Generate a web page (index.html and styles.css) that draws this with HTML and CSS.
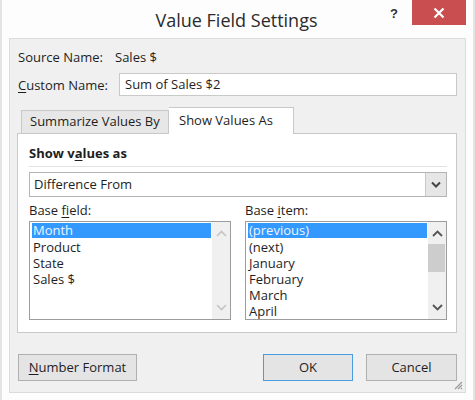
FILE: index.html
```html
<!DOCTYPE html>
<html>
<head>
<meta charset="utf-8">
<link rel="stylesheet" href="styles.css">
</head>
<body>
<div class="window">
  <div class="titlebar">
    <div></div>
    <div class="title">Value Field Settings</div>
    <div class="controls">
      <span class="help">?</span>
      <div class="close">
        <svg width="12" height="12" viewBox="0 0 12 12"><path d="M1.5 1.5 L10.5 10.5 M10.5 1.5 L1.5 10.5" stroke="#fff" stroke-width="2.2" fill="none"/></svg>
      </div>
    </div>
  </div>
  <div class="panel">
    <div class="row source">
      <span class="lbl">Source Name:</span>
      <span>Sales $</span>
    </div>
    <div class="row custom">
      <span class="lbl"><u>C</u>ustom Name:</span>
      <div class="input">Sum of Sales $2</div>
    </div>
    <div class="tabs">
      <div class="tab">Summarize Values By</div>
      <div class="tab active">Show Values As</div>
    </div>
    <div class="tabpanel">
      <div class="section-title">Show v<u>a</u>lues as</div>
      <div class="rule"></div>
      <div class="select">
        <span class="select-text">Difference From</span>
        <span class="drop">
          <svg width="10" height="7" viewBox="0 0 10 7"><path d="M1 1.5 L5 5.5 L9 1.5" stroke="#444" stroke-width="2" fill="none"/></svg>
        </span>
      </div>
      <div class="lists">
        <div class="col">
          <div class="lbl">Base <u>f</u>ield:</div>
          <div class="listbox">
            <div class="items">
              <div class="item sel">Month</div>
              <div class="item">Product</div>
              <div class="item">State</div>
              <div class="item">Sales $</div>
            </div>
            <div class="scroll disabled">
              <svg class="arrow" width="11" height="7" viewBox="0 0 11 7"><path d="M1 6 L5.5 1.5 L10 6" stroke="#c4c4c4" stroke-width="1.6" fill="none"/></svg>
              <div class="track"></div>
              <svg class="arrow" width="11" height="7" viewBox="0 0 11 7"><path d="M1 1 L5.5 5.5 L10 1" stroke="#c4c4c4" stroke-width="1.6" fill="none"/></svg>
            </div>
          </div>
        </div>
        <div class="col">
          <div class="lbl">Base <u>i</u>tem:</div>
          <div class="listbox">
            <div class="items">
              <div class="item sel">(previous)</div>
              <div class="item">(next)</div>
              <div class="item">January</div>
              <div class="item">February</div>
              <div class="item">March</div>
              <div class="item">April</div>
            </div>
            <div class="scroll">
              <svg class="arrow" width="11" height="7" viewBox="0 0 11 7"><path d="M1 6 L5.5 1.5 L10 6" stroke="#555" stroke-width="1.8" fill="none"/></svg>
              <div class="track"><div class="thumb"></div></div>
              <svg class="arrow" width="11" height="7" viewBox="0 0 11 7"><path d="M1 1 L5.5 5.5 L10 1" stroke="#555" stroke-width="1.8" fill="none"/></svg>
            </div>
          </div>
        </div>
      </div>
    </div>
    <div class="buttons">
      <div class="btn numfmt"><u>N</u>umber Format</div>
      <div class="spacer"></div>
      <div class="btn default">OK</div>
      <div class="btn">Cancel</div>
    </div>
    <svg class="grip" width="9" height="9" viewBox="0 0 9 9"><path d="M8 1 L1 8 M8 4 L4 8 M8 7 L7 8" stroke="#9a9a9a" stroke-width="1.2" fill="none"/></svg>
  </div>
</div>
</body>
</html>
```
FILE: styles.css
```css
* { box-sizing: border-box; }
html, body { margin: 0; padding: 0; background: #ffffff; }
body {
  font-family: "Open Sans", "Noto Sans", "Liberation Sans", sans-serif;
  font-size: 13px;
  color: #1e1e1e;
}
u { text-decoration: underline; text-underline-offset: 2px; }

.window {
  width: 475px;
  height: 400px;
  background: #fdfdfd;
  border-left: 2px solid #e4e4e4;
  border-right: 2px solid #e4e4e4;
  display: flex;
  flex-direction: column;
}

.titlebar {
  height: 38px;
  display: grid;
  grid-template-columns: 1fr auto 1fr;
  align-items: start;
}
.title {
  font-size: 18px;
  color: #2b2b2b;
  line-height: 24px;
  padding-top: 8px;
  margin-left: -2px;
}
.controls {
  display: flex;
  justify-content: flex-end;
  align-items: flex-start;
  margin-right: 7px;
}
.help {
  font-family: "Liberation Sans", sans-serif;
  font-weight: bold;
  font-size: 13px;
  color: #333;
  margin-top: 6px;
  margin-right: 14px;
}
.close {
  width: 54px;
  height: 25px;
  background: #c94e50;
  display: flex;
  align-items: center;
  justify-content: center;
}

.panel {
  position: relative;
  margin: 0 7px 7px 7px;
  flex: 1;
  background: #f0f0f0;
  border: 1px solid #dcdcdc;
  padding: 9px 8px 0 8px;
  display: flex;
  flex-direction: column;
}

.row {
  display: flex;
  align-items: center;
}
.source { height: 18px; }
.source .lbl { width: 97px; }
.custom { margin-top: 7px; height: 23px; }
.custom .lbl { width: 101px; }
.input {
  flex: 1;
  height: 23px;
  background: #fff;
  border: 1px solid #c9c9c9;
  padding-left: 5px;
  line-height: 21px;
}

.tabs {
  margin-top: 11px;
  height: 26px;
  display: flex;
  align-items: flex-end;
  padding-left: 3px;
  position: relative;
  z-index: 1;
}
.tab {
  height: 23px;
  line-height: 21px;
  padding: 0 7px 0 8px;
  width: 148px;
  background: #e7e7e7;
  border: 1px solid #c8c8c8;
  border-bottom: none;
}
.tab.active {
  height: 27px;
  width: 125px;
  background: #fff;
  border-left: none;
  margin-bottom: -1px;
  line-height: 25px;
  padding-left: 10px;
}

.tabpanel {
  margin: 0 0 0 -1px;
  height: 200px;
  background: #fff;
  border: 1px solid #c8c8c8;
  padding: 10px 9px 0 11px;
}
.section-title {
  font-weight: bold;
  height: 18px;
  line-height: 18px;
}
.rule {
  margin-top: 4px;
  height: 1px;
  background: #e2e2e2;
}
.select {
  margin-top: 5px;
  height: 25px;
  border: 1px solid #b4b4b4;
  display: flex;
  align-items: stretch;
  background: #fff;
}
.select-text {
  flex: 1;
  padding-left: 4px;
  line-height: 23px;
}
.drop {
  width: 21px;
  background: #e6e6e6;
  border-left: 1px solid #c8c8c8;
  display: flex;
  align-items: center;
  justify-content: center;
}

.lists {
  margin-top: 4px;
  display: grid;
  grid-template-columns: 1fr 1fr;
  column-gap: 14px;
}
.col .lbl {
  height: 18px;
  line-height: 18px;
}
.listbox {
  margin-top: 2px;
  height: 99px;
  border: 1px solid #9c9c9c;
  display: flex;
  background: #fff;
}
.items {
  flex: 1;
  padding: 1px 1px 0 2px;
}
.item {
  height: 16px;
  line-height: 16px;
  padding-left: 1px;
}
.item.sel {
  background: #3399ff;
  color: #eef5ff;
  height: 15px;
  line-height: 15px;
  margin-bottom: 1px;
}
.scroll {
  width: 18px;
  background: #f0f0f0;
  display: flex;
  flex-direction: column;
  align-items: center;
  padding: 8px 0 8px;
}
.arrow { display: block; flex: none; }
.track {
  flex: 1;
  width: 100%;
  padding-top: 7px;
}
.thumb {
  width: 17px;
  height: 28px;
  background: #cdcdcd;
}

.buttons {
  margin-top: 21px;
  display: flex;
  gap: 13px;
}
.spacer { flex: 1; }
.btn {
  height: 27px;
  width: 91px;
  background: #e4e4e4;
  border: 1px solid #b0b0b0;
  text-align: center;
  line-height: 25px;
}
.btn.numfmt { width: 119px; }
.btn.default { width: 90px; border-color: #4b9be0; }

.grip {
  position: absolute;
  right: 2px;
  bottom: 2px;
}
```
